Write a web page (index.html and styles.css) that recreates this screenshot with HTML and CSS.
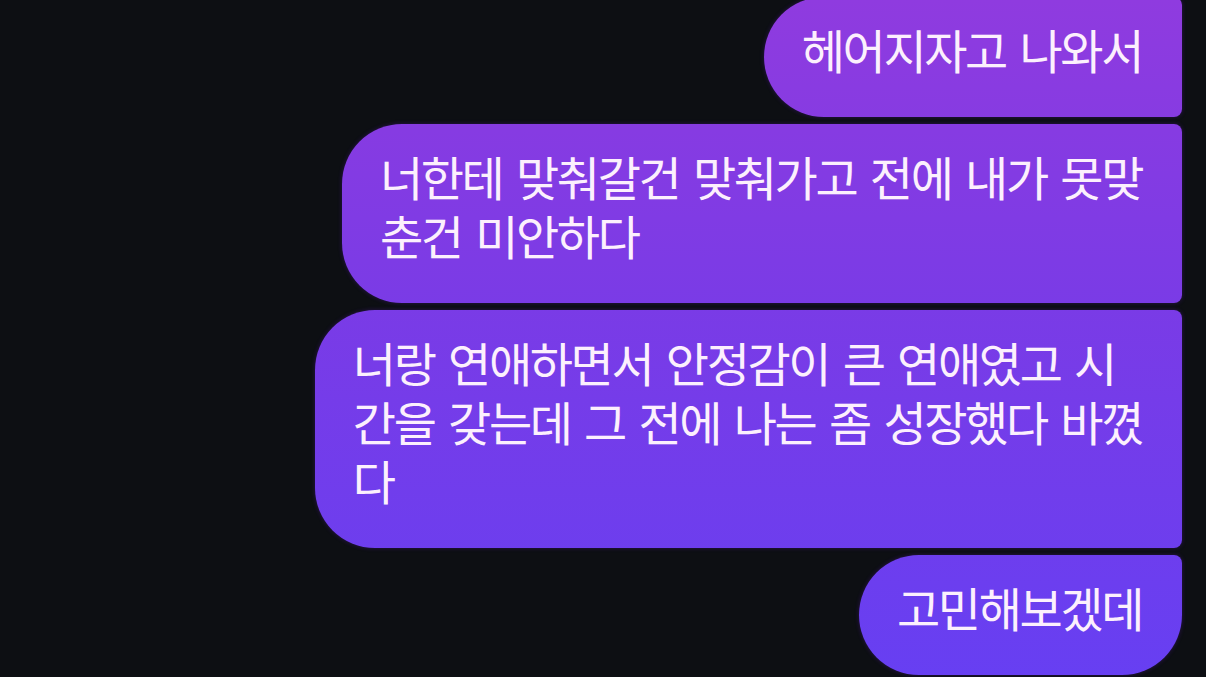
FILE: index.html
```html
<!DOCTYPE html>
<html lang="ko">
<head>
<meta charset="utf-8">
<title>Chat</title>
<link rel="stylesheet" href="styles.css">
</head>
<body>
<div class="chat">
  <div class="bubble">헤어지자고 나와서</div>
  <div class="bubble">너한테 맞춰갈건 맞춰가고 전에 내가 못맞<br>춘건 미안하다</div>
  <div class="bubble">너랑 연애하면서 안정감이 큰 연애였고 시<br>간을 갖는데 그 전에 나는 좀 성장했다 바꼈<br>다</div>
  <div class="bubble bubble-last">고민해보겠데</div>
</div>
</body>
</html>
```

FILE: styles.css
```css
html, body {
  margin: 0;
  padding: 0;
  background: #0d0f13;
}

.chat {
  box-sizing: border-box;
  height: 100vh;
  overflow: hidden;
  display: flex;
  flex-direction: column;
  align-items: flex-end;
  justify-content: flex-end;
  gap: 7px;
  padding: 0 24px 2px 0;
}

.bubble {
  flex: none;
  white-space: nowrap;
  box-sizing: border-box;
  padding: 22px 40px 39px 38px;
  border-radius: 60px 8px 8px 60px;
  background: linear-gradient(to bottom, #8f3bdf 0%, #7a3be6 45%, #673ff2 100%) fixed;
  box-shadow: 0 0 4px rgba(80, 25, 160, 0.45);
  color: #fcf0fd;
  font-family: "Noto Sans CJK KR", "Noto Sans", sans-serif;
  font-size: 47px;
  font-weight: 400;
  line-height: 59px;
  letter-spacing: -2.4px;
  word-spacing: 2.8px;
}

.bubble-last {
  border-bottom-right-radius: 60px;
}
```
